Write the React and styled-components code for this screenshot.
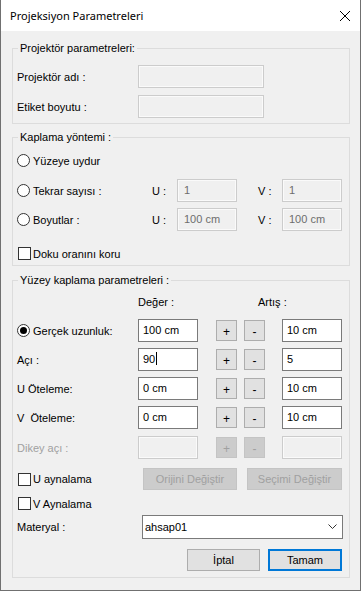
import styled, { createGlobalStyle } from "styled-components";

const GlobalStyle = createGlobalStyle`
  html, body {
    margin: 0;
    padding: 0;
    background: #f0f0f0;
  }
  body {
    font-family: "Liberation Sans", Arial, sans-serif;
    font-size: 11px;
    color: #000;
  }
`;

const Window = styled.div`
  box-sizing: border-box;
  width: 361px;
  height: 591px;
  border: 1px solid #707070;
  border-top: none;
  background: #f0f0f0;
  display: flex;
  flex-direction: column;
`;

const TitleBar = styled.div`
  height: 31px;
  flex-shrink: 0;
  background: #fff;
  display: flex;
  align-items: center;
  justify-content: space-between;
  padding: 0 10px 0 9px;
  font-family: "Noto Sans", "Open Sans", sans-serif;
  font-size: 11px;
`;

const Body = styled.div`
  padding: 0 10px 0 11px;
`;

const Group = styled.section`
  position: relative;
  margin-top: ${(p) => p.$mt}px;
  border: 1px solid #dcdcdc;
  padding: 0 4px ${(p) => p.$pb}px 4px;
`;

const Caption = styled.span`
  position: absolute;
  top: -7px;
  left: 5px;
  padding: 0 2px;
  line-height: 13px;
  background: #f0f0f0;
`;

const Row = styled.div`
  display: flex;
  align-items: center;
  height: ${(p) => p.$h}px;
  margin-top: ${(p) => p.$mt}px;
`;

const MethodRow = styled.div`
  display: grid;
  grid-template-columns: 135px 25px 60px 45px 60px;
  align-items: center;
  height: 23px;
  margin-top: ${(p) => p.$mt}px;
`;

const ParamRow = styled.div`
  display: grid;
  grid-template-columns: 121px 60px 84px 60px;
  align-items: center;
  height: 23px;
  margin-top: ${(p) => p.$mt}px;
`;

const Label = styled.span`
  flex-shrink: 0;
  width: ${(p) => (p.$w ? `${p.$w}px` : "auto")};
  padding-left: ${(p) => p.$pl || 0}px;
  color: ${(p) => (p.$disabled ? "#a0a0a0" : "#000")};
  white-space: pre;
`;

const Field = styled.div`
  box-sizing: border-box;
  width: ${(p) => p.$w}px;
  height: 23px;
  display: flex;
  align-items: center;
  padding: 0 0 2px ${(p) => (p.$disabled ? 6 : 4)}px;
  border: 1px solid ${(p) => (p.$disabled ? "#cccccc" : "#7a7a7a")};
  background: ${(p) => (p.$disabled ? "#f0f0f0" : "#fff")};
  box-shadow: ${(p) => (p.$disabled ? "inset 0 0 0 1px #fafafa" : "none")};
  color: ${(p) => (p.$disabled ? "#6d6d6d" : "#000")};
`;

const Caret = styled.span`
  display: inline-block;
  width: 1px;
  height: 13px;
  margin-left: 1px;
  background: #000;
`;

const Option = styled.label`
  display: flex;
  align-items: center;
  gap: 3px;
`;

const Radio = styled.span`
  box-sizing: border-box;
  width: 13px;
  height: 13px;
  border: 1px solid #333;
  border-radius: 50%;
  background: #fff;
  display: flex;
  align-items: center;
  justify-content: center;
  &::after {
    content: "";
    width: 7px;
    height: 7px;
    border-radius: 50%;
    background: ${(p) => (p.$checked ? "#000" : "transparent")};
  }
`;

const Check = styled.span`
  box-sizing: border-box;
  width: 13px;
  height: 13px;
  margin: 0 -1px 0 1px;
  border: 1px solid #333;
  background: #fff;
`;

const SpinGroup = styled.div`
  display: flex;
  align-items: center;
  gap: 7px;
  padding-left: 18px;
`;

const SpinButton = styled.button`
  box-sizing: border-box;
  width: 21px;
  height: 21px;
  padding: 2px 0 0;
  font-family: inherit;
  font-size: 12px;
  color: ${(p) => (p.disabled ? "#a0a0a0" : "#000")};
  border: 1px solid ${(p) => (p.disabled ? "#c4c4c4" : "#adadad")};
  background: ${(p) => (p.disabled ? "#cccccc" : "#e1e1e1")};
`;

const PushButton = styled.button`
  box-sizing: border-box;
  width: ${(p) => p.$w}px;
  height: 22px;
  margin-left: ${(p) => p.$ml || 0}px;
  padding: 0;
  font-family: inherit;
  font-size: 11px;
  color: ${(p) => (p.disabled ? "#a0a0a0" : "#000")};
  border: ${(p) =>
    p.$default ? "2px solid #0078d7" : p.disabled ? "1px solid #c4c4c4" : "1px solid #adadad"};
  background: ${(p) => (p.disabled ? "#cccccc" : "#e1e1e1")};
`;

const Combo = styled.div`
  box-sizing: border-box;
  width: 201px;
  height: 24px;
  display: flex;
  align-items: center;
  justify-content: space-between;
  padding: 0 5px 1px 2px;
  border: 1px solid #7a7a7a;
  background: #fff;
`;

const HeaderRow = styled.div`
  display: flex;
  height: 13px;
  margin-top: 15px;
  padding-left: 121px;
`;

function Close() {
  return (
    <svg width="10" height="10" viewBox="0 0 10 10">
      <path d="M0 0L10 10M10 0L0 10" stroke="#000" strokeWidth="1" />
    </svg>
  );
}

function Chevron() {
  return (
    <svg width="9" height="5" viewBox="0 0 9 5">
      <path d="M0.5 0.5L4.5 4.5L8.5 0.5" stroke="#333" strokeWidth="1" fill="none" />
    </svg>
  );
}

const params = [
  { label: "Açı :", value: "90", step: "5", caret: true },
  { label: "U Öteleme:", value: "0 cm", step: "10 cm" },
  { label: "V  Öteleme:", value: "0 cm", step: "10 cm" },
];

export default function App() {
  return (
    <>
      <GlobalStyle />
      <Window>
        <TitleBar>
          <span>Projeksiyon Parametreleri</span>
          <Close />
        </TitleBar>
        <Body>
          <Group $mt={17} $pb={5}>
            <Caption>Projektör parametreleri:</Caption>
            <Row $h={23} $mt={16}>
              <Label $w={121}>Projektör adı :</Label>
              <Field $w={126} $disabled />
            </Row>
            <Row $h={23} $mt={7}>
              <Label $w={121}>Etiket boyutu :</Label>
              <Field $w={126} $disabled />
            </Row>
          </Group>

          <Group $mt={13} $pb={5}>
            <Caption>Kaplama yöntemi :</Caption>
            <Row $h={23} $mt={11}>
              <Option>
                <Radio />
                Yüzeye uydur
              </Option>
            </Row>
            <MethodRow $mt={7}>
              <Option>
                <Radio />
                Tekrar sayısı :
              </Option>
              <Label>U :</Label>
              <Field $w={60} $disabled>1</Field>
              <Label $pl={21}>V :</Label>
              <Field $w={60} $disabled>1</Field>
            </MethodRow>
            <MethodRow $mt={6}>
              <Option>
                <Radio />
                Boyutlar :
              </Option>
              <Label>U :</Label>
              <Field $w={60} $disabled>100 cm</Field>
              <Label $pl={21}>V :</Label>
              <Field $w={60} $disabled>100 cm</Field>
            </MethodRow>
            <Row $h={13} $mt={16}>
              <Option>
                <Check />
                Doku oranını koru
              </Option>
            </Row>
          </Group>

          <Group $mt={14} $pb={6}>
            <Caption>Yüzey kaplama parametreleri :</Caption>
            <HeaderRow>
              <Label $w={120}>Değer :</Label>
              <Label>Artış :</Label>
            </HeaderRow>
            <ParamRow $mt={10}>
              <Option>
                <Radio $checked />
                Gerçek uzunluk:
              </Option>
              <Field $w={60}>100 cm</Field>
              <SpinGroup>
                <SpinButton>+</SpinButton>
                <SpinButton>-</SpinButton>
              </SpinGroup>
              <Field $w={60}>10 cm</Field>
            </ParamRow>
            {params.map((p) => (
              <ParamRow key={p.label} $mt={6}>
                <Label>{p.label}</Label>
                <Field $w={60}>
                  {p.value}
                  {p.caret && <Caret />}
                </Field>
                <SpinGroup>
                  <SpinButton>+</SpinButton>
                  <SpinButton>-</SpinButton>
                </SpinGroup>
                <Field $w={60}>{p.step}</Field>
              </ParamRow>
            ))}
            <ParamRow $mt={7}>
              <Label $disabled>Dikey açı :</Label>
              <Field $w={60} $disabled />
              <SpinGroup>
                <SpinButton disabled>+</SpinButton>
                <SpinButton disabled>-</SpinButton>
              </SpinGroup>
              <Field $w={60} $disabled />
            </ParamRow>
            <Row $h={22} $mt={9}>
              <Label $w={126}>
                <Option>
                  <Check />
                  U aynalama
                </Option>
              </Label>
              <PushButton $w={94} disabled>
                Orijini Değiştir
              </PushButton>
              <PushButton $w={95} $ml={10} disabled>
                Seçimi Değiştir
              </PushButton>
            </Row>
            <Row $h={13} $mt={7}>
              <Option>
                <Check />
                V Aynalama
              </Option>
            </Row>
            <Row $h={24} $mt={5}>
              <Label $w={125}>Materyal :</Label>
              <Combo>
                <span>ahsap01</span>
                <Chevron />
              </Combo>
            </Row>
            <Row $h={22} $mt={10}>
              <PushButton $w={73} $ml={170}>
                İptal
              </PushButton>
              <PushButton $w={74} $ml={8} $default>
                Tamam
              </PushButton>
            </Row>
          </Group>
        </Body>
      </Window>
    </>
  );
}
